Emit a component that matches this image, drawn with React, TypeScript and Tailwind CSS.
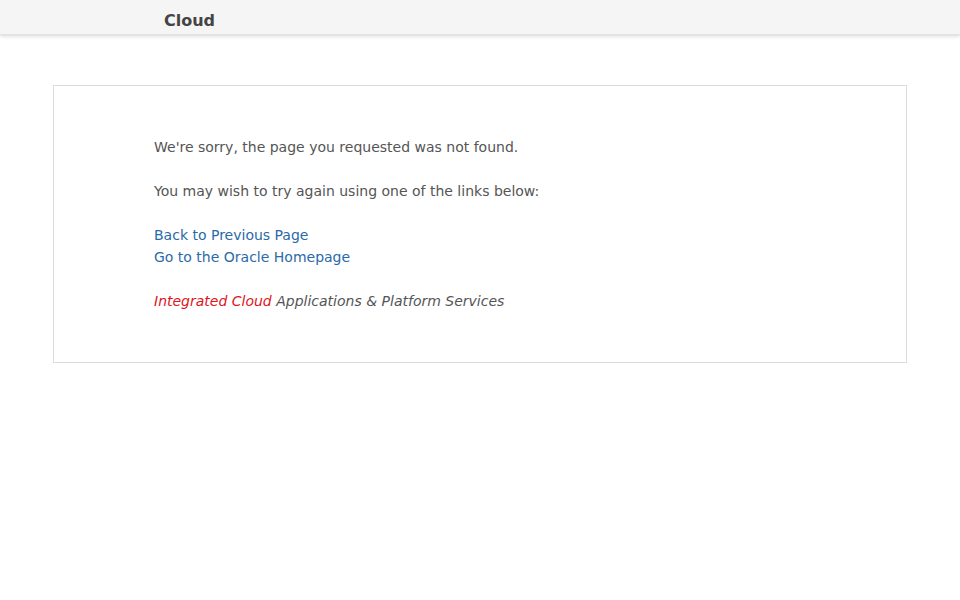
export default function App() {
  return (
    <div className="min-h-screen bg-white font-['DejaVu_Sans',sans-serif]">
      <header className="h-[35px] bg-[#f5f5f5] shadow-[0_1px_4px_rgba(0,0,0,0.18)] border-b border-[#e2e2e2] flex items-center pl-[164px]">
        <span className="text-[16px] font-bold text-[#444] leading-none mt-[8px]">Cloud</span>
      </header>

      <main className="mx-[53px] mt-[50px] border border-[#dcdcdc] pl-[100px] pt-[50px] pb-[50px] text-[14px] leading-[22px] text-[#555]">
        <p>We're sorry, the page you requested was not found.</p>
        <p className="mt-[22px]">You may wish to try again using one of the links below:</p>
        <div className="mt-[22px] flex flex-col">
          <a href="#" className="text-[#2a6aa8] w-fit">Back to Previous Page</a>
          <a href="#" className="text-[#2a6aa8] w-fit">Go to the Oracle Homepage</a>
        </div>
        <p className="mt-[22px] italic">
          <span className="text-[#e0141c]">Integrated Cloud</span> Applications &amp; Platform Services
        </p>
      </main>
    </div>
  );
}
